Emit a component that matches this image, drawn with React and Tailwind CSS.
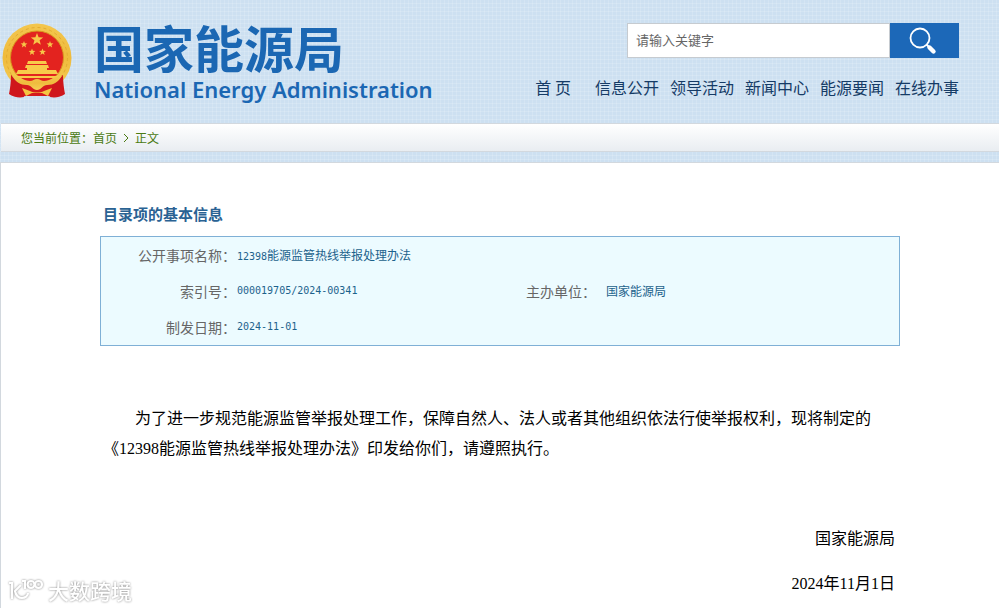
import React, { useState } from "react";

const navItems = ["信息公开", "领导活动", "新闻中心", "能源要闻", "在线办事"];

function Star({ x, y, r }) {
  const points = [];
  for (let i = 0; i < 10; i++) {
    const radius = i % 2 === 0 ? r : r * 0.42;
    const angle = (Math.PI / 5) * i - Math.PI / 2;
    points.push(`${x + radius * Math.cos(angle)},${y + radius * Math.sin(angle)}`);
  }
  return <polygon points={points.join(" ")} fill="#f7c548" />;
}

function Emblem() {
  return (
    <svg viewBox="0 0 72 76" className="h-[76px] w-[72px] shrink-0" aria-hidden="true">
      <defs>
        <linearGradient id="gold" x1="0" y1="0" x2="0" y2="1">
          <stop offset="0" stopColor="#f3c64e" />
          <stop offset="0.5" stopColor="#efbb3d" />
          <stop offset="1" stopColor="#f6cf55" />
        </linearGradient>
      </defs>
      <circle cx="35" cy="35" r="34.5" fill="url(#gold)" />
      <circle cx="35" cy="35" r="30.5" fill="none" stroke="#e3ab30" strokeWidth="1" strokeDasharray="3 3" />
      <circle cx="35" cy="34.5" r="26.5" fill="#e3231f" stroke="#d9971f" strokeWidth="1" />
      <Star x={35} y={16.5} r={6.5} />
      <Star x={22} y={21.5} r={3.6} />
      <Star x={48} y={21.5} r={3.6} />
      <Star x={30} y={29} r={3.6} />
      <Star x={40.5} y={29} r={3.6} />
      <path d="M26 38h18l1 3H25zM24 42h22l1 3H23zM25 45h20v3H25zM16 47h38l2 4H14zM15 53h40v2H15z" fill="#f8cb4a" />
      <path d="M10 56c8-1 14 1 18 4l7 4 7-4c5-3 11-5 18-4l-2 17c-4 1-9 1-12 0H24c-4 1-9 1-12 0z" fill="#d51a1d" />
      <path d="M9 52c0 7-1 14-2 19 4 3 10 4 15 3l-3-15zM61 52c0 7 1 14 2 19-4 3-10 4-15 3l3-15z" fill="#cf171c" />
      <path d="M10 53c8 0 12 5 18 5 3 0 4-2 7-2s4 2 7 2c6 0 10-5 18-5-4 6-8 9-15 9-4 0-6 5-10 5s-6-5-10-5c-7 0-11-3-15-9z" fill="url(#gold)" />
      <path d="M20 65l8 3c4 2 10 2 14 0l8-3-4 8-6-3H30l-6 3z" fill="#f5c541" />
    </svg>
  );
}

function SearchIcon() {
  return (
    <svg viewBox="0 0 28 28" className="h-7 w-7" fill="none" stroke="white" aria-hidden="true">
      <circle cx="11" cy="11" r="9.5" strokeWidth="1.8" />
      <path d="M17.5 17.5l2.5 2.5" strokeWidth="2" />
      <path d="M20.5 20.5l4 4" strokeWidth="4.4" strokeLinecap="round" />
    </svg>
  );
}

function Header() {
  const [keyword, setKeyword] = useState("");

  return (
    <header className="flex items-start justify-between pt-[23px] pr-10 pb-5 pl-[2px]">
      <a href="#" className="flex items-start text-[#1b67b3]">
        <Emblem />
        <span className="-mt-[6px] ml-5 flex flex-col whitespace-nowrap">
          <span className="text-[50px] leading-[58px] font-bold">国家能源局</span>
          <span className="font-['Noto_Sans'] text-[22px] leading-7 font-semibold">
            National Energy Administration
          </span>
        </span>
      </a>

      <div className="flex flex-col items-end">
        <form className="flex" onSubmit={(e) => e.preventDefault()}>
          <input
            type="text"
            aria-label="请输入关键字"
            placeholder="请输入关键字"
            value={keyword}
            onChange={(e) => setKeyword(e.target.value)}
            className="h-[35px] w-[263px] border border-[#c6cbd0] bg-white px-2 pb-[2px] text-[13px] text-gray-600 outline-none placeholder:text-[#666]"
          />
          <button
            type="submit"
            aria-label="搜索"
            className="flex h-[35px] w-[69px] items-center justify-center bg-[#1c68b8] pr-1"
          >
            <SearchIcon />
          </button>
        </form>
        <nav className="mt-[17px] flex gap-[11px] text-base leading-6 whitespace-nowrap text-[#153b66]">
          <a href="#" className="mr-[13px]">首 页</a>
          {navItems.map((item) => (
            <a key={item} href="#">{item}</a>
          ))}
        </nav>
      </div>
    </header>
  );
}

function Breadcrumb() {
  return (
    <div className="ml-px flex items-center border-y border-[#d2d8de] bg-linear-to-b from-white to-[#e9edf1] pl-5 text-xs leading-[27px] text-[#4a7a12]">
      您当前位置：<a href="#">首页</a>
      <svg viewBox="0 0 6 10" className="mx-[6px] h-[10px] w-[6px]" fill="none" stroke="currentColor" aria-hidden="true">
        <path d="M1 1l4 4-4 4" />
      </svg>
      <span>正文</span>
    </div>
  );
}

function InfoTable() {
  return (
    <table className="w-full border-separate border-spacing-0 border border-[#7fb0d6] bg-[#ecfbff] text-left text-xs text-[#1c628c]">
      <tbody>
        <tr className="h-9">
          <th className="w-[135px] text-right text-sm font-normal text-[#666]">公开事项名称：</th>
          <td className="pl-px" colSpan={3}>
            <span className="font-['DejaVu_Sans_Mono'] text-[10px]">12398</span>
            能源监管热线举报处理办法
          </td>
        </tr>
        <tr className="h-9">
          <th className="text-right text-sm font-normal text-[#666]">索引号：</th>
          <td className="w-[290px] pl-px font-['DejaVu_Sans_Mono'] text-[10px]">000019705/2024-00341</td>
          <th className="w-[70px] text-right text-sm font-normal whitespace-nowrap text-[#666]">主办单位：</th>
          <td className="pl-[10px]">国家能源局</td>
        </tr>
        <tr className="h-9">
          <th className="text-right text-sm font-normal text-[#666]">制发日期：</th>
          <td className="pl-px font-['DejaVu_Sans_Mono'] text-[10px]" colSpan={3}>2024-11-01</td>
        </tr>
      </tbody>
    </table>
  );
}

function Watermark() {
  return (
    <div className="fixed bottom-1 left-2 flex items-center gap-1 text-[21px] leading-7 font-medium text-white drop-shadow-[0_0_1px_#888]">
      <svg viewBox="0 0 36 24" className="h-6 w-9" fill="none" stroke="white" strokeWidth="2.2" aria-hidden="true">
        <path d="M1 5h3v16M13 7L7 13c1 5 4 7 7 7 3 0 6-2 6-5" />
        <path d="M14 3h3v8" />
        <circle cx="23" cy="6.5" r="3.5" />
        <circle cx="30.5" cy="6.5" r="3.5" />
      </svg>
      <span>大数跨境</span>
    </div>
  );
}

function App() {
  return (
    <div className="min-h-screen bg-[#cde0f1] bg-[repeating-linear-gradient(0deg,#ffffff26_0_1px,transparent_1px_4px),repeating-linear-gradient(90deg,#ffffff26_0_1px,transparent_1px_4px)] font-['Noto_Sans_CJK_SC',sans-serif]">
      <Header />
      <Breadcrumb />
      <main className="mt-[10px] min-h-[446px] border-t border-l border-[#d2d8de] bg-white">
        <div className="mx-auto max-w-[800px] pt-[39px]">
          <h1 className="mb-[10px] pl-[3px] text-[15px] leading-6 font-bold text-[#2a6293]">
            目录项的基本信息
          </h1>
          <InfoTable />
          <article className="mt-[58px] pr-[5px] pl-[3px] font-['Liberation_Serif','Noto_Sans_CJK_SC',serif] text-base leading-[30px] text-black [text-spacing-trim:space-all]">
            <p className="indent-8">
              为了进一步规范能源监管举报处理工作，保障自然人、法人或者其他组织依法行使举报权利，现将制定的《12398能源监管热线举报处理办法》印发给你们，请遵照执行。
            </p>
            <p className="mt-[60px] text-right">国家能源局</p>
            <p className="mt-[15px] text-right">2024年11月1日</p>
          </article>
        </div>
      </main>
      <Watermark />
    </div>
  );
}

export default App;
